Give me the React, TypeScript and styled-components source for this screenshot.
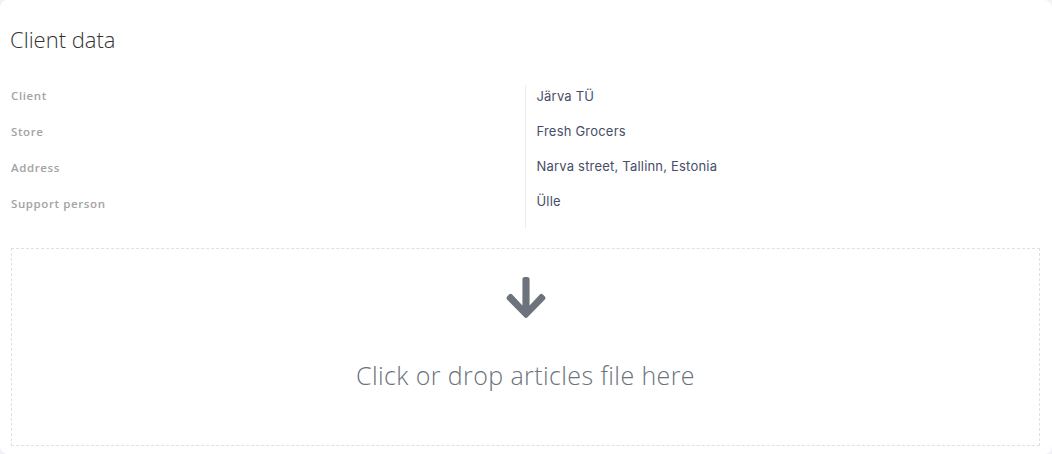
import styled, { createGlobalStyle } from "styled-components";

const GlobalStyle = createGlobalStyle`
  html, body {
    margin: 0;
    padding: 0;
    background: #f1f2f6;
  }
  body {
    font-family: "Open Sans", "Liberation Sans", sans-serif;
  }
`;

interface ROW {
  label: string;
  value: string;
}

const rows: ROW[] = [
  { label: "Client", value: "Järva TÜ" },
  { label: "Store", value: "Fresh Grocers" },
  { label: "Address", value: "Narva street, Tallinn, Estonia" },
  { label: "Support person", value: "Ülle" },
];

const ArrowDown = () => (
  <svg width="40" height="41" viewBox="0 32 448 448" fill="currentColor" preserveAspectRatio="none">
    <path d="M413.1 222.5l22.2 22.2c9.4 9.4 9.4 24.6 0 33.9L241 473c-9.4 9.4-24.6 9.4-33.9 0L12.7 278.6c-9.4-9.4-9.4-24.6 0-33.9l22.2-22.2c9.5-9.5 25-9.3 34.3.4L184 343.4V56c0-13.3 10.7-24 24-24h32c13.3 0 24 10.7 24 24v287.4l114.8-120.5c9.3-9.8 24.8-10 34.3-.4z" />
  </svg>
);

const App = () => {
  return (
    <>
      <GlobalStyle />
      <Card>
        <Title>Client data</Title>
        <DataGrid>
          <Column>
            {rows.map((r) => (
              <Label key={r.label}>{r.label}</Label>
            ))}
          </Column>
          <ValueColumn>
            {rows.map((r) => (
              <Value key={r.label}>{r.value}</Value>
            ))}
          </ValueColumn>
        </DataGrid>
        <DropZone>
          <IconWrap>
            <ArrowDown />
          </IconWrap>
          <DropText>Click or drop articles file here</DropText>
        </DropZone>
      </Card>
    </>
  );
};

const Card = styled.div`
  background: #fff;
  border-radius: 8px;
  height: 454px;
  box-sizing: border-box;
  padding: 24px 12px 8px 11px;
  display: flex;
  flex-direction: column;
`;

const Title = styled.h2`
  margin: 0 0 0 -1px;
  font-family: "Open Sans", sans-serif;
  font-weight: 300;
  font-size: 22px;
  line-height: 30px;
  color: #333;
`;

const DataGrid = styled.div`
  display: grid;
  grid-template-columns: 1fr 1fr;
  align-items: start;
  margin-top: 24px;
`;

const Column = styled.div`
  display: flex;
  flex-direction: column;
`;

const ValueColumn = styled(Column)`
  border-left: 1px solid #ececec;
  padding: 0 0 3px 11px;
  margin: 7px 0 0 -1px;
`;

const Label = styled.div`
  font-family: "Open Sans", sans-serif;
  font-weight: 600;
  font-size: 11.5px;
  letter-spacing: 0.6px;
  line-height: 36px;
  height: 36px;
  color: #a3a3a3;
`;

const Value = styled.div`
  font-family: "Inter", sans-serif;
  font-size: 13px;
  letter-spacing: 0.2px;
  line-height: 22px;
  height: 35px;
  color: #474e68;
`;

const DropZone = styled.div`
  flex: 1;
  margin-top: 20px;
  border: 1px dashed #e0e0e0;
  display: flex;
  flex-direction: column;
  align-items: center;
  padding-top: 28px;
`;

const IconWrap = styled.div`
  color: #6c737c;
  height: 41px;
`;

const DropText = styled.div`
  margin-top: 40px;
  font-family: "Open Sans", sans-serif;
  font-weight: 300;
  font-size: 25px;
  letter-spacing: 0.4px;
  line-height: 34px;
  color: #6c737c;
`;

export default App;
